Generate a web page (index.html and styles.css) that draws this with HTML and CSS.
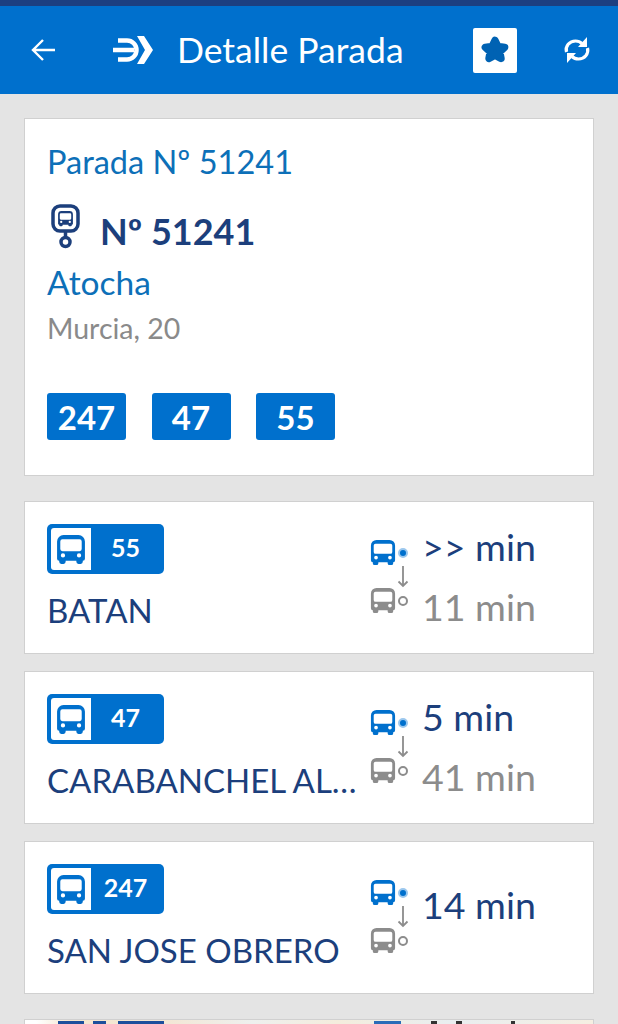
FILE: index.html
```html
<!DOCTYPE html>
<html lang="es">
<head>
    <meta charset="UTF-8">
    <meta name="viewport" content="width=device-width, initial-scale=1.0">
    <title>Detalle Parada</title>
    <link rel="stylesheet" href="styles.css">
</head>
<body>
    <svg class="defs" width="0" height="0">
        <symbol id="bus" viewBox="0 0 28 28">
            <path fill-rule="evenodd" d="M7 1h14a6 6 0 0 1 6 6v16a2 2 0 0 1-2 2v1a2 2 0 0 1-2 2h-2a2 2 0 0 1-2-2v-1h-10v1a2 2 0 0 1-2 2h-2a2 2 0 0 1-2-2v-1a2 2 0 0 1-2-2v-16a6 6 0 0 1 6-6zM6 5a2 2 0 0 0-2 2v7a2 2 0 0 0 2 2h16a2 2 0 0 0 2-2v-7a2 2 0 0 0-2-2zM6.500 18a2 2 0 1 0 0 4 2 2 0 0 0 0-4zM21.500 18a2 2 0 1 0 0 4 2 2 0 0 0 0-4z"/>
        </symbol>
    </svg>

    <div class="status-bar"></div>
    <header class="topbar">
        <svg class="back" width="28" height="26" viewBox="0 0 28 26"><path d="M25 13H4M13 3L3 13l10 10" fill="none" stroke="#fff" stroke-width="2.400"/></svg>
        <svg class="logo" width="40" height="30" viewBox="0 0 40 30">
            <path d="M5 5.500h9a9.500 9.500 0 0 1 0 19h-9M0 15h21" fill="none" stroke="#fff" stroke-width="4.500"/>
            <path fill="#fff" d="M24 1h7l9 14-9 14h-7l8-14z"/>
        </svg>
        <h1 class="title">Detalle Parada</h1>
        <div class="fav">
            <svg width="34" height="34" viewBox="0 0 28 28"><path fill="#0062b3" stroke="#0062b3" stroke-width="6" stroke-linejoin="round" d="M14 6l2.400 5 5.600.8-4 3.800 1 5.400-5-2.700-5 2.700 1-5.400-4-3.800 5.600-.8z"/></svg>
        </div>
        <svg class="refresh" width="28" height="30" viewBox="0 0 28 30">
            <g fill="none" stroke="#fff" stroke-width="3.200">
                <path d="M3.500 17c-1.500-6 3-11 9-11 3 0 5 1 6.500 2.500"/>
                <path d="M24.500 13c1.500 6-3 11-9 11-3 0-5-1-6.500-2.500"/>
            </g>
            <path fill="#fff" d="M24 2v10h-9zM4 28V18h9z"/>
        </svg>
    </header>

    <main class="content">
        <section class="card stop">
            <h2 class="stop-heading">Parada Nº 51241</h2>
            <div class="stop-number">
                <svg width="36" height="48" viewBox="0 0 36 48">
                    <rect x="6" y="2" width="25" height="25" rx="7" fill="none" stroke="#1c3f7c" stroke-width="3.500"/>
                    <use href="#bus" x="10.500" y="6.500" width="16" height="16" fill="#1c3f7c"/>
                    <path d="M18.500 27v7" stroke="#1c3f7c" stroke-width="3.500"/>
                    <circle cx="18.500" cy="38" r="4.500" fill="none" stroke="#1c3f7c" stroke-width="3.500"/>
                </svg>
                <span>Nº 51241</span>
            </div>
            <div class="stop-name">Atocha</div>
            <div class="stop-address">Murcia, 20</div>
            <div class="lines">
                <span class="line">247</span>
                <span class="line">47</span>
                <span class="line">55</span>
            </div>
        </section>

        <section class="card arrival">
            <div class="route">
                <div class="badge">
                    <span class="badge-icon"><svg width="30" height="30"><use href="#bus"/></svg></span>
                    <span class="badge-num">55</span>
                </div>
                <div class="dest">BATAN</div>
            </div>
            <div class="icons">
                <span class="bus-now"><svg width="26" height="26"><use href="#bus"/></svg><i class="dot"></i></span>
                <svg class="arrow" width="12" height="24" viewBox="0 0 12 24"><path d="M6 2v20M1.500 17.500L6 22l4.500-4.500" fill="none" stroke="#8c8c8c" stroke-width="1.800"/></svg>
                <span class="bus-next"><svg width="26" height="26"><use href="#bus"/></svg><i class="ring"></i></span>
            </div>
            <div class="times">
                <div class="time">&gt;&gt; min</div>
                <div class="time next">11 min</div>
            </div>
        </section>

        <section class="card arrival">
            <div class="route">
                <div class="badge">
                    <span class="badge-icon"><svg width="30" height="30"><use href="#bus"/></svg></span>
                    <span class="badge-num">47</span>
                </div>
                <div class="dest">CARABANCHEL AL…</div>
            </div>
            <div class="icons">
                <span class="bus-now"><svg width="26" height="26"><use href="#bus"/></svg><i class="dot"></i></span>
                <svg class="arrow" width="12" height="24" viewBox="0 0 12 24"><path d="M6 2v20M1.500 17.500L6 22l4.500-4.500" fill="none" stroke="#8c8c8c" stroke-width="1.800"/></svg>
                <span class="bus-next"><svg width="26" height="26"><use href="#bus"/></svg><i class="ring"></i></span>
            </div>
            <div class="times">
                <div class="time">5 min</div>
                <div class="time next">41 min</div>
            </div>
        </section>

        <section class="card arrival">
            <div class="route">
                <div class="badge">
                    <span class="badge-icon"><svg width="30" height="30"><use href="#bus"/></svg></span>
                    <span class="badge-num">247</span>
                </div>
                <div class="dest">SAN JOSE OBRERO</div>
            </div>
            <div class="icons">
                <span class="bus-now"><svg width="26" height="26"><use href="#bus"/></svg><i class="dot"></i></span>
                <svg class="arrow" width="12" height="24" viewBox="0 0 12 24"><path d="M6 2v20M1.500 17.500L6 22l4.500-4.500" fill="none" stroke="#8c8c8c" stroke-width="1.800"/></svg>
                <span class="bus-next"><svg width="26" height="26"><use href="#bus"/></svg><i class="ring"></i></span>
            </div>
            <div class="times single">
                <div class="time">14 min</div>
            </div>
        </section>

        <section class="card map"></section>
    </main>
</body>
</html>
```

FILE: styles.css
```css
html, body {
    margin: 0;
    height: 100vh;
    overflow: hidden;
}
body {
    font-family: Lato, "Open Sans", sans-serif;
    background-color: #e4e4e4;
}
.defs {
    display: block;
    height: 0;
}
.status-bar {
    height: 6px;
    background-color: #1c3f80;
}
.topbar {
    height: 88px;
    background-color: #0070cd;
    display: flex;
    align-items: center;
    color: #fff;
}
.back {
    margin-left: 30px;
}
.logo {
    margin-left: 55px;
}
.title {
    margin: -2px 0 0 24px;
    flex: 1;
    font-size: 35.500px;
    font-weight: 400;
}
.fav {
    width: 44px;
    height: 45px;
    background-color: #fff;
    border-radius: 2px;
    display: flex;
    align-items: center;
    justify-content: center;
}
.refresh {
    margin: 0 27px 0 46px;
}
.content {
    padding: 24px 24px 0;
    display: flex;
    flex-direction: column;
}
.card {
    background-color: #fff;
    border: 1px solid #d0d0d0;
    box-sizing: border-box;
    flex: none;
}
.stop {
    height: 358px;
    padding: 23px 23px 0 22px;
    margin-bottom: 25px;
}
.stop-heading {
    margin: 0;
    font-size: 32.500px;
    line-height: 40px;
    font-weight: 400;
    color: #0d70b8;
}
.stop-number {
    display: flex;
    align-items: center;
    margin-top: 24px;
    height: 50px;
    font-size: 36px;
    font-weight: 700;
    color: #1c3f7c;
}
.stop-number svg {
    align-self: flex-start;
    margin: -2px 17px 0 0;
}
.stop-name {
    margin-top: 6px;
    font-size: 33.500px;
    line-height: 40px;
    color: #0d70b8;
}
.stop-address {
    margin-top: 6px;
    font-size: 28.500px;
    line-height: 40px;
    color: #8a8a8a;
}
.lines {
    display: flex;
    gap: 25.500px;
    margin-top: 45px;
}
.line {
    width: 79px;
    height: 47px;
    background-color: #0070cd;
    border-radius: 3px;
    color: #fff;
    font-size: 33px;
    font-weight: 700;
    display: flex;
    align-items: center;
    justify-content: center;
}
.arrival {
    height: 153px;
    margin-bottom: 17px;
    padding: 22px 0 0 22px;
    display: flex;
}
.route {
    width: 314px;
    flex: none;
}
.badge {
    width: 117px;
    height: 50px;
    background-color: #0070cd;
    border-radius: 5px;
    display: flex;
    box-sizing: border-box;
    padding: 4px;
}
.badge-icon {
    width: 40px;
    background-color: #fff;
    fill: #0070cd;
    border-radius: 3px 0 0 3px;
    display: flex;
    align-items: center;
    justify-content: center;
}
.badge-num {
    flex: 1;
    color: #fff;
    font-size: 25px;
    font-weight: 700;
    padding-bottom: 4px;
    display: flex;
    align-items: center;
    justify-content: center;
}
.dest {
    margin-top: 15px;
    font-size: 33px;
    line-height: 42px;
    color: #1c3f7c;
    white-space: nowrap;
}
.icons {
    width: 40px;
    margin-left: 10px;
    padding-top: 16px;
    display: flex;
    flex-direction: column;
}
.bus-now,
.bus-next {
    display: flex;
    align-items: center;
    height: 24px;
}
.bus-now svg,
.bus-next svg {
    flex: none;
    margin: 0 -1px;
}
.bus-now {
    fill: #0070cd;
}
.bus-next {
    fill: #8c8c8c;
}
.dot,
.ring {
    width: 10px;
    height: 10px;
    margin: 2px 0 0 3px;
    box-sizing: border-box;
    border-radius: 50%;
}
.dot {
    background-color: #0070cd;
    border: 2px solid #9cc8ee;
}
.ring {
    border: 2px solid #8c8c8c;
}
.arrow {
    margin-left: 26px;
    flex: none;
}
.times {
    margin: -7px 0 0 11px;
}
.times.single {
    padding-top: 18px;
}
.time {
    font-size: 37.500px;
    line-height: 60px;
    color: #1c3f7c;
    white-space: nowrap;
}
.time.next {
    color: #8c8c8c;
}
/* only the first pixels of the map card are in view */
.map {
    height: 5px;
    margin-top: 8px;
    border-bottom: 0;
    background:
        linear-gradient(90deg, transparent 33px, #1c4f9c 33px, #1c4f9c 59px, transparent 59px, transparent 68px, #1c4f9c 68px, #1c4f9c 81px, transparent 81px, transparent 93px, #1c4f9c 93px, #1c4f9c 139px, transparent 139px, transparent 349px, #2a6cb8 349px, #2a6cb8 376px, transparent 376px, transparent 406px, #333 406px, #333 412px, transparent 412px, transparent 431px, #333 431px, #333 437px, transparent 437px, transparent 486px, #333 486px, #333 490px, transparent 490px) left bottom / 100% 3px no-repeat,
        linear-gradient(90deg, #fff 2%, #f5e6cf 8%, #f3e7d5 25%, #eef0ee 40%, #f4eddd 55%, #e9eef0 75%, #f5efe2 100%);
}
```
